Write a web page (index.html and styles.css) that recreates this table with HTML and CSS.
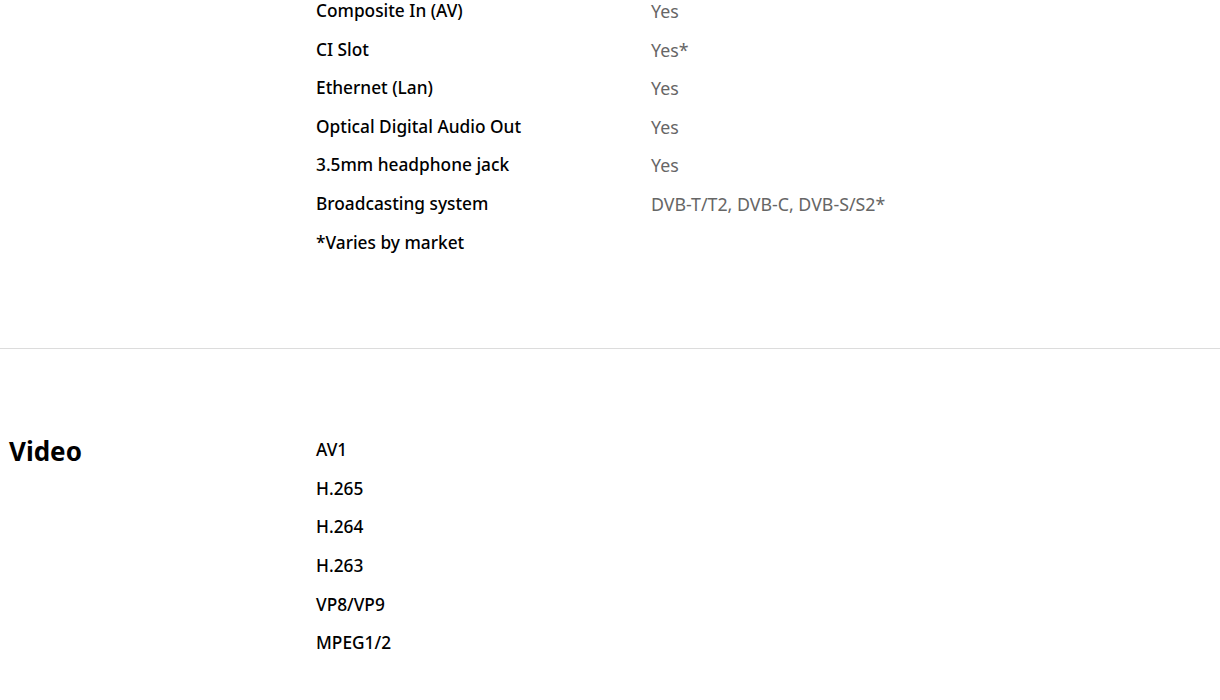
FILE: index.html
```html
<!DOCTYPE html>
<html lang="en">
<head>
<meta charset="utf-8">
<link rel="stylesheet" href="styles.css">
</head>
<body>
<div class="page">
  <section class="spec spec-first">
    <h2 class="spec-title"></h2>
    <div class="spec-body">
      <div class="row"><span class="label">Composite In (AV)</span><span class="value">Yes</span></div>
      <div class="row"><span class="label">CI Slot</span><span class="value">Yes*</span></div>
      <div class="row"><span class="label">Ethernet (Lan)</span><span class="value">Yes</span></div>
      <div class="row"><span class="label">Optical Digital Audio Out</span><span class="value">Yes</span></div>
      <div class="row"><span class="label">3.5mm headphone jack</span><span class="value">Yes</span></div>
      <div class="row"><span class="label">Broadcasting system</span><span class="value">DVB-T/T2, DVB-C, DVB-S/S2*</span></div>
      <div class="row"><span class="label">*Varies by market</span></div>
    </div>
  </section>
  <section class="spec">
    <h2 class="spec-title">Video</h2>
    <div class="spec-body">
      <div class="row"><span class="label">AV1</span></div>
      <div class="row"><span class="label">H.265</span></div>
      <div class="row"><span class="label">H.264</span></div>
      <div class="row"><span class="label">H.263</span></div>
      <div class="row"><span class="label">VP8/VP9</span></div>
      <div class="row"><span class="label">MPEG1/2</span></div>
    </div>
  </section>
</div>
</body>
</html>
```
FILE: styles.css
```css
html, body {
  margin: 0;
  padding: 0;
  background: #fff;
}
body {
  font-family: "Noto Sans", "Open Sans", sans-serif;
  color: #000;
}
.page {
  margin-top: -1px;
}
.spec {
  display: flex;
  padding: 89px 0 79px 9px;
  border-bottom: 1px solid #dcdcdc;
}
.spec-first {
  padding-top: 0;
}
.spec-title {
  width: 307px;
  flex: none;
  margin: 0;
  font-size: 26px;
  font-weight: 700;
  line-height: 24px;
  padding-top: 1px;
}
.spec-body {
  display: flex;
  flex-direction: column;
}
.row {
  display: flex;
  height: 38.6px;
  line-height: 24px;
  font-size: 17.8px;
}
.label {
  width: 335px;
  font-size: 17.3px;
  font-weight: 500;
  color: #000;
}
.value {
  color: #666;
  font-weight: 400;
}
```
